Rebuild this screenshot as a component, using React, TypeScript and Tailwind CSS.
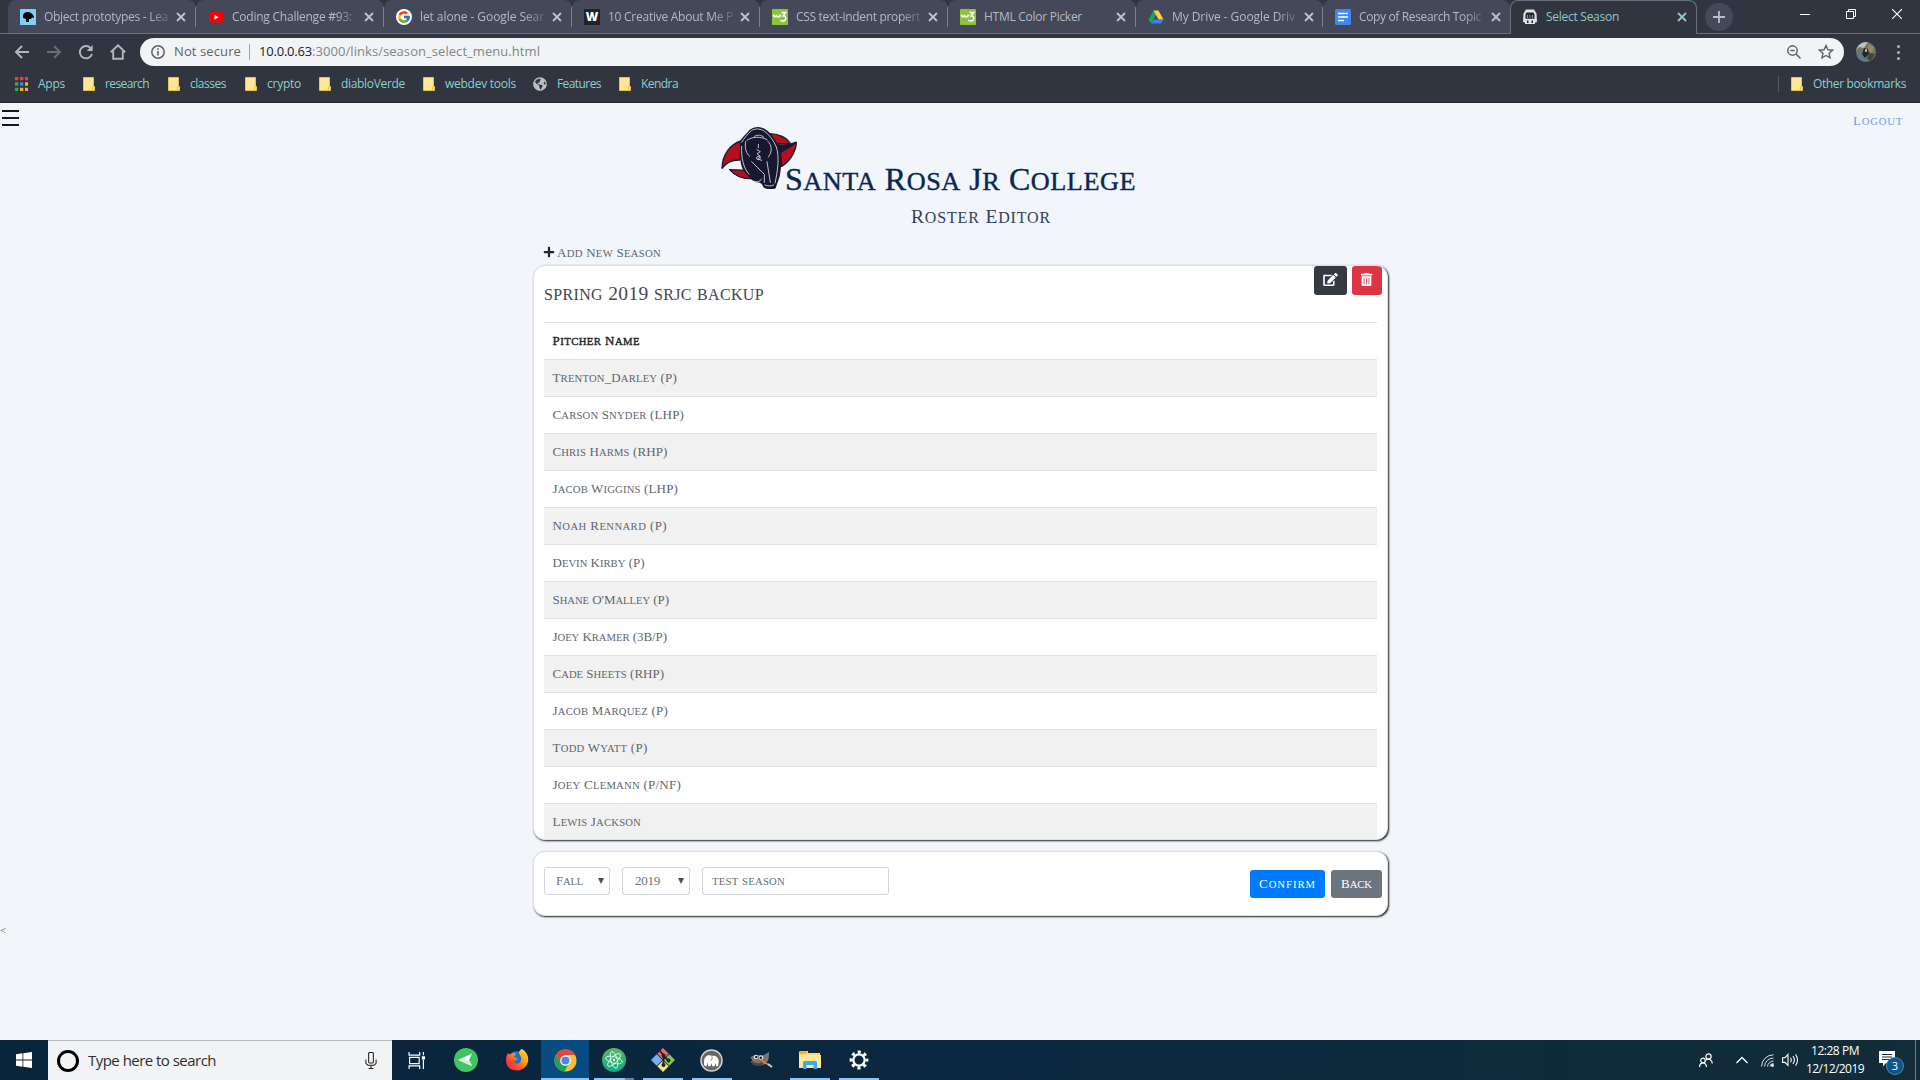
import { useLayoutEffect, useRef, useState, type ReactNode } from "react";
import { FaEdit, FaTrashAlt, FaPlus, FaGlobeAmericas } from "react-icons/fa";
import { FcGoogle } from "react-icons/fc";

/** Tracks its text so that the line fills the given width. */
function Fit({ text, w, className = "", caps = false }: { text: string; w: number; className?: string; caps?: boolean }) {
  const ref = useRef<HTMLSpanElement>(null);
  const [spacing, setSpacing] = useState(0);
  useLayoutEffect(() => {
    if (ref.current) {
      setSpacing((w - ref.current.getBoundingClientRect().width) / text.length);
    }
  }, []);
  return (
    <span className={`block shrink-0 whitespace-pre ${className}`}>
      <span ref={ref} className="inline-block" style={{ letterSpacing: `${spacing}px` }}>
        {caps ? <Caps text={text} /> : text}
      </span>
    </span>
  );
}

/** Titling capitals: lowercase runs are set as smaller capitals. */
function Caps({ text }: { text: string }) {
  return (
    <>
      {text.split(/([a-z]+)/).map((part, i) =>
        /^[a-z]+$/.test(part) ? (
          <span key={i} className="text-[0.82em] uppercase">{part}</span>
        ) : (
          part
        ),
      )}
    </>
  );
}

const W3 = () => (
  <svg viewBox="0 0 16 16" className="size-4">
    <rect width="16" height="16" rx="1" fill="#8bc33f" />
    <path d="M1.500 5.500c0 3 3 3 3 .3c0 3 3.500 3 3.800-.3M9.500 3.500h4l-2.500 3.200c4 0 3.500 5.300-.5 5.300c-1 0-1.700-.4-2-1" fill="none" stroke="#fff" strokeWidth="1.600" />
  </svg>
);

const tabIcons: Record<string, ReactNode> = {
  odin: (
    <svg viewBox="0 0 16 16" className="size-4">
      <rect width="16" height="16" fill="#7fd0f2" />
      <path d="M3 7C3 3 8 2 11 4c2 1 3 3 3 5l-2-.5L11 10H9v3H6v-3L3 9z" fill="#050708" />
    </svg>
  ),
  youtube: (
    <svg viewBox="0 0 16 16" className="size-4">
      <rect x="1" y="3" width="14" height="10.500" rx="2" fill="#f00" />
      <path d="M6.500 5.700v5l4-2.500z" fill="#fff" />
    </svg>
  ),
  google: (
    <span className="flex size-4 items-center justify-center rounded-full bg-white">
      <FcGoogle className="size-[14px]" />
    </span>
  ),
  w: (
    <span className="flex size-4 items-center justify-center bg-[#1f2428] font-['Open_Sans'] text-[12px] font-extrabold text-white">W</span>
  ),
  w3: <W3 />,
  drive: (
    <svg viewBox="0 0 16 16" className="size-4">
      <path d="M5.500 1.500L8 6 3 14.500.7 10.500z" fill="#11a861" />
      <path d="M5.500 1.500h5l5 9h-5z" fill="#ffcf48" />
      <path d="M3 14.500l2.500-4h10l-2.500 4z" fill="#3f7ff0" />
    </svg>
  ),
  docs: (
    <svg viewBox="0 0 16 16" className="size-4">
      <rect width="16" height="16" rx="1.500" fill="#4285f4" />
      <path d="M3 4.500h10M3 8h10M3 11.500h6" stroke="#fff" strokeWidth="1.700" />
    </svg>
  ),
  season: (
    <svg viewBox="0 0 16 16" className="size-4">
      <path d="M4 .5h8l2.500 4L15 13l-2 .5V15H3v-1.500L1 13l.5-8.500z" fill="#dfe3e6" />
      <path d="M3.500 5.500l1-2h7l1 2v4.200h-9zM5 11.500h1.500V14H5zM9.500 11.500H11V14H9.500z" fill="#20292e" />
      <path d="M5.500 6v3M8 6v3M10.500 6v3" stroke="#9bbcc4" strokeWidth=".8" />
    </svg>
  ),
};

const tabs = [
  { icon: "odin", title: "Object prototypes - Lea", w: 124 },
  { icon: "youtube", title: "Coding Challenge #93:", w: 120 },
  { icon: "google", title: "let alone - Google Sear", w: 124 },
  { icon: "w", title: "10 Creative About Me P", w: 125 },
  { icon: "w3", title: "CSS text-indent propert", w: 124 },
  { icon: "w3", title: "HTML Color Picker", w: 98 },
  { icon: "drive", title: "My Drive - Google Driv", w: 123 },
  { icon: "docs", title: "Copy of Research Topic", w: 122 },
  { icon: "season", title: "Select Season", w: 73 },
];

function Cross({ className }: { className: string }) {
  return (
    <svg viewBox="0 0 10 10" className={`size-[10px] shrink-0 ${className}`}>
      <path d="M1 1l8 8M9 1L1 9" stroke="currentColor" strokeWidth="1.800" />
    </svg>
  );
}

function TabStrip() {
  return (
    <div className="flex h-[34px] bg-[#30353f]">
      <div className="w-2 shrink-0 border-b border-[#69717d]" />
      {tabs.map((t, i) => {
        const active = i === 8;
        return (
          <div
            key={i}
            className={`flex h-[34px] shrink-0 items-center rounded-t-lg ${i < 6 ? "w-[188px]" : "w-[187px]"} ${
              active
                ? "border border-b-0 border-[#69717d] bg-[#30353f] pb-px pl-[11px]"
                : "border-b border-[#69717d] bg-[#444858] pl-3"
            }`}
          >
            <span className="shrink-0">{tabIcons[t.icon]}</span>
            <div
              className={`ml-2 w-[127px] ${
                t.w > 110 ? "[mask-image:linear-gradient(to_right,#000_82%,rgba(0,0,0,0.15)_100%)]" : ""
              }`}
            >
              <Fit text={t.title} w={t.w} className={`text-[12px] leading-5 ${active ? "text-[#8fc8cc]" : "text-[#b2bac6]"}`} />
            </div>
            <Cross className={active ? "ml-[4px] text-[#8fc8cc]" : "ml-[5px] text-[#bcc3cd]"} />
            {i < 7 && <div className="ml-auto h-5 w-px bg-[#7b828e]" />}
          </div>
        );
      })}
      <div className="flex flex-1 items-center border-b border-[#69717d] pl-[8px]">
        <span className="flex size-7 items-center justify-center rounded-full bg-[#444858]">
          <svg viewBox="0 0 12 12" className="size-3">
            <path d="M6 0v12M0 6h12" stroke="#b4bfc6" strokeWidth="1.800" />
          </svg>
        </span>
        <div className="mb-[6px] ml-[67px] flex items-center gap-[36px] text-white">
          <svg viewBox="0 0 10 10" className="size-[10px]">
            <path d="M0 5.500h10" stroke="currentColor" />
          </svg>
          <svg viewBox="0 0 10 10" className="size-[10px]">
            <path d="M.5 2.500h7v7h-7zM2.500 2V.5h7v7H8" fill="none" stroke="currentColor" />
          </svg>
          <svg viewBox="0 0 10 10" className="size-[10px]">
            <path d="M0 0l10 10M10 0L0 10" stroke="currentColor" strokeWidth="1.100" />
          </svg>
        </div>
      </div>
    </div>
  );
}

function Toolbar() {
  return (
    <div className="flex h-9 items-center bg-[#30353f] pl-[14px]">
      <svg viewBox="0 0 16 16" className="size-4 text-[#b3b7bb]">
        <path d="M15 8H2M8 2L2 8l6 6" fill="none" stroke="currentColor" strokeWidth="1.900" />
      </svg>
      <svg viewBox="0 0 16 16" className="ml-4 size-4 text-[#686e76]">
        <path d="M1 8h13M8 2l6 6-6 6" fill="none" stroke="currentColor" strokeWidth="1.900" />
      </svg>
      <svg viewBox="0 0 16 16" className="ml-4 size-4 text-[#b3b7bb]">
        <path d="M14 10A6.200 6.200 0 1 1 12.500 3.800" fill="none" stroke="currentColor" strokeWidth="1.900" />
        <path d="M14.700 1v6h-6z" fill="currentColor" />
      </svg>
      <svg viewBox="0 0 16 16" className="ml-4 size-4 text-[#b3b7bb]">
        <path d="M.8 8.300L8 1.300l7.200 7M3.200 7v7.700h9.600V7" fill="none" stroke="currentColor" strokeWidth="1.900" />
      </svg>
      <div className="ml-[14px] flex h-7 w-[1704px] items-center rounded-full bg-[#f1f3f4] pl-[11px]">
        <svg viewBox="0 0 14 14" className="size-[14px]">
          <circle cx="7" cy="7" r="6.200" fill="none" stroke="#5f6368" strokeWidth="1.500" />
          <path d="M7 6v4.500M7 3.200v1.600" stroke="#5f6368" strokeWidth="1.600" />
        </svg>
        <Fit text="Not secure" w={67} className="ml-[9px] text-[13px] text-[#5f6368]" />
        <div className="ml-2 h-4 w-px bg-[#9fa3a8]" />
        <Fit text="10.0.0.63" w={53} className="ml-[9px] text-[13px] text-[#202124]" />
        <Fit text=":3000/links/season_select_menu.html" w={228} className="text-[13px] text-[#80868b]" />
        <svg viewBox="0 0 16 16" className="ml-auto size-4 text-[#5f6368]">
          <circle cx="6.500" cy="6.500" r="4.700" fill="none" stroke="currentColor" strokeWidth="1.500" />
          <path d="M10 10l4.500 4.500M4.300 6.500h4.400" stroke="currentColor" strokeWidth="1.600" />
        </svg>
        <svg viewBox="0 0 16 16" className="mr-[10px] ml-4 size-4 text-[#5f6368]">
          <path d="M8 1.500l1.900 4.300 4.700.4-3.600 3.100 1.100 4.600L8 11.500l-4.100 2.400L5 9.300 1.400 6.200l4.700-.4z" fill="none" stroke="currentColor" strokeWidth="1.400" />
        </svg>
      </div>
      <svg viewBox="0 0 20 20" className="ml-3 size-5 rounded-full">
        <rect width="20" height="20" fill="#6f7668" />
        <path d="M0 0h12L8 6 3 5 0 9z" fill="#b9c5b5" />
        <path d="M12 2l6 3-2 6-4-2z" fill="#998a62" />
        <path d="M8 6l4 1 1 5-4 4-3-4z" fill="#22252a" />
        <path d="M1 12l5 1 3 7H2z" fill="#4d79a7" />
        <path d="M13 11l6 1-4 7-4-2z" fill="#3c4645" />
        <path d="M9 7h2v3H9z" fill="#d2a66e" />
      </svg>
      <div className="ml-[21px] flex flex-col gap-[3px]">
        <i className="size-[3px] rounded-full bg-[#b3b7bb]" />
        <i className="size-[3px] rounded-full bg-[#b3b7bb]" />
        <i className="size-[3px] rounded-full bg-[#b3b7bb]" />
      </div>
    </div>
  );
}

function Folder() {
  return (
    <svg viewBox="0 0 12 14" className="h-[14px] w-3 shrink-0">
      <path d="M.5.500h10v9h1v4H.5z" fill="#ffe694" stroke="#e8c34e" />
      <path d="M9.500 13V9.500" stroke="#e8c34e" />
    </svg>
  );
}

function Bookmark({ text, w, slot, icon }: { text: string; w: number; slot: string; icon?: ReactNode }) {
  return (
    <div className={`flex shrink-0 items-center gap-[10px] ${slot}`}>
      {icon ?? <Folder />}
      <Fit text={text} w={w} className="-mt-px text-[12px] text-[#8ccfd2]" />
    </div>
  );
}

function BookmarkBar() {
  return (
    <div className="flex h-[33px] items-center border-b border-[#23272e] bg-[#30353f] pb-[4px] pl-[15px] leading-4">
      <Bookmark
        text="Apps"
        w={27}
        slot="w-[68px]"
        icon={
          <svg viewBox="0 0 13 14" className="h-[14px] w-[13px] shrink-0">
            <path d="M0 0h3.300v3.200H0zM5 0h3.300v3.200H5zM10 0h3v3.200h-3z" fill="#ee4034" />
            <path d="M0 5.300h3.300v3.400H0zM0 10.800h3.300V14H0z" fill="#34a853" />
            <path d="M5 5.300h3.300v3.400H5z" fill="#2f86f6" />
            <path d="M10 5.300h3v3.400h-3zM5 10.800h3.300V14H5zM10 10.800h3V14h-3z" fill="#fbae17" />
          </svg>
        }
      />
      <Bookmark text="research" w={44} slot="w-[85px]" />
      <Bookmark text="classes" w={36} slot="w-[77px]" />
      <Bookmark text="crypto" w={34} slot="w-[74px]" />
      <Bookmark text="diabloVerde" w={64} slot="w-[104px]" />
      <Bookmark text="webdev tools" w={71} slot="w-[110px]" />
      <Bookmark text="Features" w={44} slot="w-[86px]" icon={<FaGlobeAmericas className="size-[14px] shrink-0 text-[#bdc1c6]" />} />
      <Bookmark text="Kendra" w={37} slot="w-[90px]" />
      <div className="mr-3 ml-auto h-4 w-px bg-[#545962]" />
      <Bookmark text="Other bookmarks" w={93} slot="w-[129px]" />
    </div>
  );
}

function BearLogo() {
  return (
    <svg viewBox="0 0 228 186" className="h-[62px] w-[76px] shrink-0">
      <g stroke="#1b1b34" strokeWidth="4" strokeLinejoin="round">
        <path d="M60 42C28 52 4 82 3 124c12-17 26-26 54-25zM146 20c24 0 50 10 62 30l-44 0zM182 118c24-14 44-46 44-72-18 14-36 24-48 30zM26 128c14 18 40 30 70 26l-12-24z" fill="#b3101e" />
        <path d="M166 52c20 4 40 2 58-6-12 12-28 22-48 30z" fill="#17172f" />
      </g>
      <path d="M60 42C66 32 78 22 88 10c12-10 34-10 48 2 12 8 20 22 32 40 12 24 12 62 6 94l-12 36c-12 4-24 2-32-2-4-10-10-16-18-16-14-2-22-8-28-18-14-10-24-32-24-60z" fill="#17172f" stroke="#17172f" strokeWidth="5" />
      <g fill="none" stroke="#c0c3d2" strokeWidth="3" strokeLinecap="round">
        <path d="M62 46C68 34 82 20 92 10c12-6 28-6 40 4 16 12 26 28 34 46 10 30 4 74-4 108" />
        <path d="M78 40c14-12 44-12 60-2M74 44c-4 20 2 36 12 44M140 42c14 12 14 34 2 48M62 58c-2 36 6 66 22 84M92 104l38 38v24M138 104l10 62M100 28c10-6 22-4 28 2M112 52v10M108 68l10 6-10 6 10 8-8 8 12 4M112 88a6 5 0 1 0 .1 0M100 162c6 6 16 2 22-6M132 174c8 4 18 4 26 0" />
      </g>
    </svg>
  );
}

const pitchers: [string, number][] = [
  ["Trenton_Darley (P)", 124.5],
  ["Carson Snyder (LHP)", 131.5],
  ["Chris Harms (RHP)", 115],
  ["Jacob Wiggins (LHP)", 125.5],
  ["Noah Rennard (P)", 114.5],
  ["Devin Kirby (P)", 92],
  ["Shane O'Malley (P)", 116.5],
  ["Joey Kramer (3B/P)", 114.5],
  ["Cade Sheets (RHP)", 111.5],
  ["Jacob Marquez (P)", 115.5],
  ["Todd Wyatt (P)", 95],
  ["Joey Clemann (P/NF)", 128.5],
  ["Lewis Jackson", 88.5],
];

function Page() {
  return (
    <main className="flex h-[937px] flex-col bg-[#f2f5fa] font-['Liberation_Serif',serif] leading-none">
      <div className="flex h-6 items-start justify-between">
        <div className="mt-[7px] ml-[2px] flex w-[17px] flex-col gap-[5px]">
          <i className="h-[2px] bg-[#16181b]" />
          <i className="h-[2px] bg-[#16181b]" />
          <i className="h-[2px] bg-[#16181b]" />
        </div>
        <Fit caps text="Logout" w={50} className="mt-[11px] mr-[17px] text-[13px] text-[#6f9bf2]" />
      </div>
      <div className="ml-[721px] flex h-[70px]">
        <BearLogo />
        <Fit caps text="Santa Rosa Jr College" w={351} className="-ml-3 pt-[36px] text-[32px] text-[#0a2751] [-webkit-text-stroke:0.4px_#0a2751]" />
      </div>
      <Fit caps text="Roster Editor" w={140} className="mt-[10px] ml-[911px] h-[37px] text-[19.5px] text-[#33425c]" />
      <div className="ml-[543px] flex h-[21px] items-start">
        <FaPlus className="mt-[2px] size-[12px] text-[#212529]" />
        <Fit caps text="Add New Season" w={104} className="ml-[2px] pt-[2px] text-[13px] text-[#5f656c]" />
      </div>

      <section className="ml-[533px] flex h-[575px] w-[855px] flex-col overflow-hidden rounded-[12px] border border-[#dee2e6] bg-white px-[10px] shadow-[1px_1px_2px_#222]">
        <div className="flex h-14 shrink-0 items-start justify-between">
          <Fit caps text="spring 2019 srjc backup" w={220} className="pt-[18px] text-[19.5px] text-[#43484e]" />
          <div className="-mr-[5px] flex gap-[5px]">
            <button className="flex h-[29px] w-[33px] items-center justify-center rounded-[3px] bg-[#343a40] text-white">
              <FaEdit className="mb-[2px] h-[13px] w-[15px]" />
            </button>
            <button className="flex h-[29px] w-[30px] items-center justify-center rounded-[3px] bg-[#dc3545] text-white">
              <FaTrashAlt className="mr-px mb-[2px] size-[13px]" />
            </button>
          </div>
        </div>
        <div className="flex h-[37px] shrink-0 border-t border-[#dee2e6] pt-[11px] pl-[8.5px]">
          <Fit caps text="Pitcher Name" w={87.5} className="text-[13px] text-[#212529] [-webkit-text-stroke:0.4px_#212529]" />
        </div>
        {pitchers.map(([name, w], i) => (
          <div key={name} className={`flex h-[37px] shrink-0 border-t border-[#dee2e6] pt-[11px] pl-[8.5px] ${i % 2 ? "bg-white" : "bg-[#f1f1f1]"}`}>
            <Fit caps text={name} w={w} className="text-[13px] text-[#61666c]" />
          </div>
        ))}
      </section>

      <section className="mt-[11px] ml-[533px] flex h-[65px] w-[855px] items-start rounded-[12px] border border-[#dee2e6] bg-white pl-[10px] shadow-[1px_1px_2px_#222]">
        <div className="mt-[15px] flex h-7 w-[66px] items-center justify-between rounded-[3px] border border-[#ced4da] pr-[5px] pl-[11px]">
          <Fit caps text="Fall" w={27} className="text-[13px] text-[#6a727a]" />
          <i className="h-0 w-0 border-x-[3.5px] border-t-[6px] border-x-transparent border-t-[#495057]" />
        </div>
        <div className="mt-[15px] ml-3 flex h-7 w-[68px] items-center justify-between rounded-[3px] border border-[#ced4da] pr-[5px] pl-3">
          <Fit text="2019" w={25} className="-mt-[2px] text-[13px] text-[#6a727a]" />
          <i className="h-0 w-0 border-x-[3.5px] border-t-[6px] border-x-transparent border-t-[#495057]" />
        </div>
        <div className="mt-[15px] ml-3 flex h-7 w-[187px] items-center rounded-[3px] border border-[#ced4da] pl-[9px]">
          <Fit caps text="test season" w={73} className="text-[13px] text-[#656d75]" />
        </div>
        <button className="mt-[18px] ml-auto flex h-7 w-[75px] items-center justify-center rounded-[3px] bg-[#007bff]">
          <Fit caps text="Confirm" w={57} className="text-[13px] text-white" />
        </button>
        <button className="mt-[18px] mr-[5px] ml-[6px] flex h-7 w-[51px] items-center justify-center rounded-[3px] bg-[#6c757d]">
          <Fit caps text="Back" w={31} className="text-[13px] text-white" />
        </button>
      </section>
      <div className="mt-[9px] text-[11px] text-[#555]">&lt;</div>
    </main>
  );
}

const apps: { slot: string; bar: string; icon: ReactNode }[] = [
  {
    slot: "w-[48px]",
    bar: "",
    icon: (
      <svg viewBox="0 0 16 16" className="size-[17px]">
        <path d="M1 0v3h10V0M1 16v-3h10v3M1.500 5h9v6h-9zM14.500 0v3M14.500 7v9" fill="none" stroke="#fff" strokeWidth="1.100" />
        <path d="M13 4h3v3h-3z" fill="#fff" />
      </svg>
    ),
  },
  {
    slot: "w-[52px]",
    bar: "",
    icon: (
      <svg viewBox="0 0 24 24" className="size-6">
        <circle cx="12" cy="12" r="12" fill="#43c463" />
        <path d="M4 12l14-6.500-3 6.500 3 6z" fill="#fff" />
        <path d="M4 12h11l3 6z" fill="#d5efdc" />
      </svg>
    ),
  },
  {
    slot: "w-[49px]",
    bar: "",
    icon: (
      <svg viewBox="0 0 24 24" className="size-6">
        <defs>
          <linearGradient id="fx" x1="1" y1="0" x2="0" y2="1">
            <stop offset="0" stopColor="#fff04a" />
            <stop offset=".4" stopColor="#ff9a12" />
            <stop offset=".7" stopColor="#ff4330" />
            <stop offset="1" stopColor="#e6196c" />
          </linearGradient>
        </defs>
        <circle cx="11.500" cy="12" r="9" fill="#1f6fd0" />
        <path d="M3 5l2 2c2-3 5-2 6-1L9 9l4 2c-2 1-4 2-4 3 2 3 7 2 7-2 1-4-3-6-2-8 1-2 2-3 3-3 5 3 7 8 6 13-2 6-7 9-12 8.500C4 22 1 17 1 12c0-3 1-5 2-7z" fill="url(#fx)" />
      </svg>
    ),
  },
  {
    slot: "w-12 bg-[#084b83]",
    bar: "w-12 bg-[#8fc4f5]",
    icon: (
      <svg viewBox="0 0 24 24" className="size-[23px]">
        <circle cx="12" cy="12" r="11.500" fill="#fbc02d" />
        <path d="M12 12L2 6.200A11.500 11.500 0 0 1 22 6.300H12z" fill="#dd4b3e" />
        <path d="M2 6.200l5.200 8.500L12 6.300z" fill="#dd4b3e" />
        <path d="M2 6.200A11.500 11.500 0 0 0 11 23.500l4.500-8L7.300 14.700z" fill="#1fa15d" />
        <circle cx="12" cy="12" r="5.500" fill="#fff" />
        <circle cx="12" cy="12" r="4.300" fill="#4587f3" />
      </svg>
    ),
  },
  {
    slot: "w-[49px]",
    bar: "w-10 bg-[#8fc4f5] border-r-[9px] border-[#6486a4]",
    icon: (
      <svg viewBox="0 0 24 24" className="size-6">
        <defs>
          <linearGradient id="atom" x1="0" y1="0" x2="0" y2="1">
            <stop offset="0" stopColor="#62b563" />
            <stop offset="1" stopColor="#10a986" />
          </linearGradient>
        </defs>
        <circle cx="12" cy="12" r="12" fill="url(#atom)" />
        <g fill="none" stroke="#e2fff0" strokeWidth=".9">
          <ellipse cx="12" cy="12" rx="8.500" ry="3.200" transform="rotate(15 12 12)" />
          <ellipse cx="12" cy="12" rx="8.500" ry="3.200" transform="rotate(75 12 12)" />
          <ellipse cx="12" cy="12" rx="8.500" ry="3.200" transform="rotate(135 12 12)" />
        </g>
        <circle cx="12" cy="12" r="1.200" fill="#fff" />
      </svg>
    ),
  },
  {
    slot: "w-[49px]",
    bar: "w-10 bg-[#8fc4f5]",
    icon: (
      <svg viewBox="0 0 24 24" className="size-6">
        <path d="M12 0l5.700 5.700L12 11.400 6.300 5.700z" fill="#f06a6a" />
        <path d="M5.700 6.300l5.700 5.700-5.700 5.700L0 12z" fill="#7dadf5" />
        <path d="M18.300 6.300L24 12l-5.700 5.700-5.700-5.700z" fill="#80c555" />
        <path d="M12 12.600l5.700 5.700L12 24l-5.700-5.700z" fill="#fbe07b" />
        <path d="M8.500 2.500L12.500 7v10M12.500 8l5 4.500" fill="none" stroke="#1d2329" strokeWidth="1.800" />
        <circle cx="12.500" cy="7.500" r="2" fill="#1d2329" />
        <circle cx="12.500" cy="17" r="2" fill="#1d2329" />
        <circle cx="17.500" cy="12.500" r="2" fill="#1d2329" />
      </svg>
    ),
  },
  {
    slot: "w-[49px]",
    bar: "w-10 bg-[#8fc4f5]",
    icon: (
      <svg viewBox="0 0 24 24" className="size-[23px]">
        <circle cx="12" cy="12" r="11" fill="#666" stroke="#d4d4d4" strokeWidth="1.500" />
        <path d="M4.500 17.500C3.500 11 5 7 9 6.500c1.500-.2 2.500 0 3.500.7 4.500-.7 7 2 7 5.800l-.6 5H17l-.5-3.500-1.200 3.500h-2.500l-.6-3.500-1.200 3.500H8.500L8 13.500 6.800 18z" fill="#fff" />
        <path d="M12.300 7.500c.8 2 .3 4-1.300 4.500" fill="none" stroke="#666" strokeWidth=".8" />
      </svg>
    ),
  },
  {
    slot: "w-[49px]",
    bar: "",
    icon: (
      <svg viewBox="0 0 24 18" className="h-[18px] w-6">
        <path d="M3 5l5-1 5 1 7-4c0 4 0 8-2 10-4 5-11 4-15 1L0 9z" fill="#7c7468" />
        <path d="M3 10c4 3 9 3 12 0l-2 4c-4 2-7 1-10-1z" fill="#4a443d" />
        <circle cx="7" cy="6" r="2.200" fill="#eee" />
        <circle cx="12" cy="6.500" r="2.300" fill="#eee" />
        <circle cx="7.300" cy="6" r="1.200" fill="#111" />
        <circle cx="11.800" cy="6.700" r="1.300" fill="#111" />
        <circle cx="1.500" cy="9" r="1.500" fill="#111" />
        <path d="M13 10l7 4" stroke="#df8334" strokeWidth="1.500" />
        <path d="M19 13l4 3" stroke="#ccc" strokeWidth="2" />
      </svg>
    ),
  },
  {
    slot: "w-[49px]",
    bar: "w-10 bg-[#8fc4f5]",
    icon: (
      <svg viewBox="0 0 22 18" className="h-[18px] w-[22px]">
        <path d="M1 0h8v2h12v15H0V1z" fill="#f8d775" />
        <path d="M0 4h22v13H0z" fill="#ffe79b" />
        <path d="M1 .5h7v2H1z" fill="#e2a929" />
        <path d="M4 18v-7l1-1h12l1 1v7h-3.500v-4h-7v4z" fill="#36aee6" />
      </svg>
    ),
  },
  {
    slot: "w-[49px]",
    bar: "w-10 bg-[#8fc4f5]",
    icon: (
      <svg viewBox="0 0 20 20" className="size-5">
        <circle cx="10" cy="10" r="5.700" fill="none" stroke="#fff" strokeWidth="2.300" />
        <circle cx="10" cy="10" r="8" fill="none" stroke="#fff" strokeWidth="2.800" strokeDasharray="3.140 3.143" strokeDashoffset="1.600" />
      </svg>
    ),
  },
];

function Taskbar() {
  return (
    <footer className="flex h-10 bg-gradient-to-r from-[#0a2439] via-[#0a2840] to-[#122c38]">
      <div className="flex w-12 items-center justify-center">
        <svg viewBox="0 0 16 16" className="size-4">
          <path d="M0 2.200L6.500 1.300v6.200H0zM7.300 1.200L16 0v7.500H7.300zM0 8.400h6.500v6.300L0 13.800zM7.300 8.400H16V16l-8.700-1.200z" fill="#fff" />
        </svg>
      </div>
      <div className="flex w-[344px] items-center border-t border-[#b7bbbf] bg-[#f2f3f4] pl-[9px]">
        <i className="size-[22px] rounded-full border-[3px] border-black" />
        <Fit text="Type here to search" w={128} className="ml-[9px] text-[15px] text-[#2e2e2e]" />
        <svg viewBox="0 0 12 18" className="mr-[15px] ml-auto h-[17px] w-[12px]">
          <rect x="3.500" y=".6" width="5" height="11" rx="1" fill="none" stroke="#222" strokeWidth="1.100" />
          <path d="M.6 8v4l2 2h6.800l2-2V8M6 14v3.400M3.500 17.400h5" fill="none" stroke="#222" strokeWidth="1.100" />
        </svg>
      </div>
      <div className="flex">
        {apps.map((a, i) => (
          <div key={i} className={`flex shrink-0 flex-col items-center ${a.slot}`}>
            <div className="flex h-[38px] items-center pt-[2px]">{a.icon}</div>
            <div className={`h-[2px] ${a.bar}`} />
          </div>
        ))}
      </div>
      <div className="ml-auto flex items-center text-white">
        <svg viewBox="0 0 14 14" className="size-[14px]">
          <g fill="none" stroke="currentColor" strokeWidth="1.200">
            <circle cx="9.500" cy="3.500" r="2.600" />
            <circle cx="4" cy="7.500" r="2.300" />
            <path d="M.6 14c0-5.500 6.800-5.500 6.800 0M7 7c3-2 6.300 0 6.300 3.500" />
          </g>
        </svg>
        <svg viewBox="0 0 12 8" className="ml-[23px] h-2 w-3">
          <path d="M.5 7L6 1.500 11.500 7" fill="none" stroke="currentColor" strokeWidth="1.300" />
        </svg>
        <svg viewBox="0 0 13 13" className="ml-[13px] size-[13px]">
          <g fill="none" stroke="currentColor">
            <path d="M.5 12.500A12 12 0 0 1 12.500.8M3.500 12.500a9 9 0 0 1 9-8.500M6.500 12.500a6 6 0 0 1 6-5.500M9 12.500a3.500 3.500 0 0 1 3.500-3" opacity=".85" />
          </g>
          <circle cx="11.500" cy="11.500" r="1.400" fill="currentColor" />
        </svg>
        <svg viewBox="0 0 17 14" className="ml-2 h-[14px] w-[17px]">
          <path d="M.6 4.700h2.400L6 1.500v11L3 9.400H.6zM8.500 4.700q1.500 2.300 0 4.600M11 3q2.800 4 0 8M13.500 1.300q4 5.700 0 11.400" fill="none" stroke="currentColor" strokeWidth="1.100" />
        </svg>
        <div className="ml-[6px] flex w-[60px] flex-col items-center text-[12px] leading-[18px]">
          <Fit text="12:28 PM" w={48} />
          <Fit text="12/12/2019" w={58} />
        </div>
        <div className="relative mr-[12px] ml-[14px] h-[18px] w-6">
          <svg viewBox="0 0 16 16" className="size-4">
            <path d="M0 0h16v12H7l-3 3.500V12H0z" fill="#fff" />
            <path d="M3 3.500h10M3 6h10M3 8.500h10" stroke="#12303f" />
          </svg>
          <span className="absolute top-[7px] left-[8px] flex size-4 items-center justify-center rounded-full bg-[#0b568f] text-[11px] ring-1 ring-[#5a7d99]">3</span>
        </div>
        <div className="mr-[4px] h-10 w-px bg-[#6c7e86]" />
      </div>
    </footer>
  );
}

export default function App() {
  return (
    <div className="h-[1080px] w-[1920px] overflow-hidden font-['Open_Sans','Noto_Sans',sans-serif]">
      <TabStrip />
      <Toolbar />
      <BookmarkBar />
      <Page />
      <Taskbar />
    </div>
  );
}
